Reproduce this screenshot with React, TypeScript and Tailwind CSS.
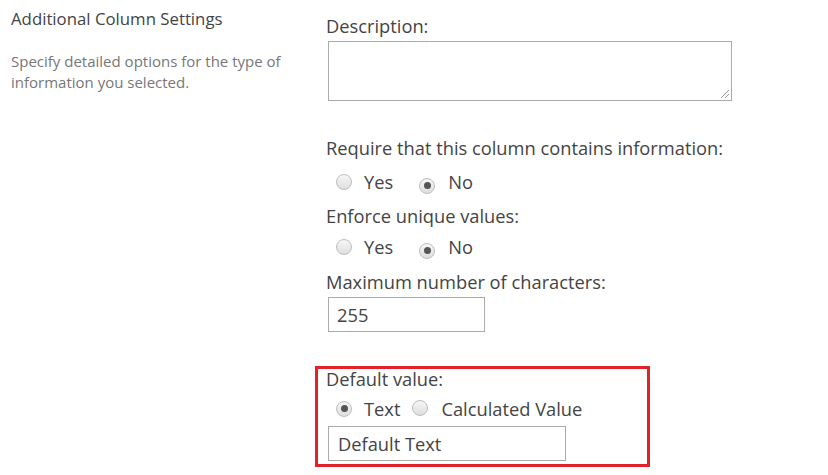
import React from "react";

function Radio({ checked }: { checked?: boolean }) {
  return (
    <span className="inline-flex h-[16px] w-[16px] items-center justify-center rounded-full border border-[#bdbdbd] bg-gradient-to-b from-[#f6f6f6] to-[#dedede]">
      {checked ? <span className="h-[7px] w-[7px] rounded-full bg-[#555]" /> : null}
    </span>
  );
}

export default function App() {
  return (
    <div
      className="flex h-[475px] w-[828px] bg-white text-[#444]"
      style={{ fontFamily: '"Open Sans", "Noto Sans", sans-serif' }}
    >
      <div className="w-[316px] shrink-0 pl-[11px] pt-[8px]">
        <div className="text-[16.8px] leading-[22px] text-[#444]">Additional Column Settings</div>
        <div className="mt-[21px] w-[295px] text-[15px] leading-[21px] text-[#777]">
          Specify detailed options for the type of information you selected.
        </div>
      </div>
      <div className="flex flex-col pt-[13px]">
        <div className="pl-[10px] text-[18.3px] leading-[25px]">Description:</div>
        <div className="ml-[12px] mt-[3px] h-[60px] w-[404px] border border-[#ababab] bg-white relative">
          <svg className="absolute bottom-[1px] right-[1px]" width="12" height="12" viewBox="0 0 12 12">
            <path d="M11 3 L3 11 M11 7 L7 11" stroke="#999" strokeWidth="1" />
          </svg>
        </div>

        <div className="mt-[34px] pl-[10px] text-[18.3px] leading-[25px]">Require that this column contains information:</div>
        <div className="mt-[9px] flex items-center pl-[20px] text-[18.3px] leading-[25px]">
          <Radio />
          <span className="ml-[12px]">Yes</span>
          <span className="ml-[26px]"><Radio checked /></span>
          <span className="ml-[13px]">No</span>
        </div>
        <div className="mt-[9px] pl-[10px] text-[18.3px] leading-[25px]">Enforce unique values:</div>
        <div className="mt-[6px] flex items-center pl-[20px] text-[18.3px] leading-[25px]">
          <Radio />
          <span className="ml-[12px]">Yes</span>
          <span className="ml-[26px]"><Radio checked /></span>
          <span className="ml-[13px]">No</span>
        </div>
        <div className="mt-[10px] pl-[10px] text-[18.3px] leading-[25px]">Maximum number of characters:</div>
        <div className="ml-[12px] mt-[3px] flex h-[35px] w-[157px] items-center border border-[#ababab] pl-[8px] text-[18.3px]">
          255
        </div>

        <div className="-ml-[1px] mt-[34px] flex h-[101px] w-[335px] flex-col border-[3px] border-[#e1222b]">
          <div className="-mt-[3px] pl-[8px] text-[18.3px] leading-[25px]">Default value:</div>
          <div className="mt-[5px] flex items-center pl-[18px] text-[18.3px] leading-[25px]">
            <Radio checked />
            <span className="ml-[12px]">Text</span>
            <span className="ml-[12px]"><Radio /></span>
            <span className="ml-[13px]">Calculated Value</span>
          </div>
          <div className="ml-[10px] mt-[5px] flex h-[35px] w-[238px] items-center border border-[#ababab] pl-[9px] text-[18.3px]">
            Default Text
          </div>
        </div>
      </div>
    </div>
  );
}
